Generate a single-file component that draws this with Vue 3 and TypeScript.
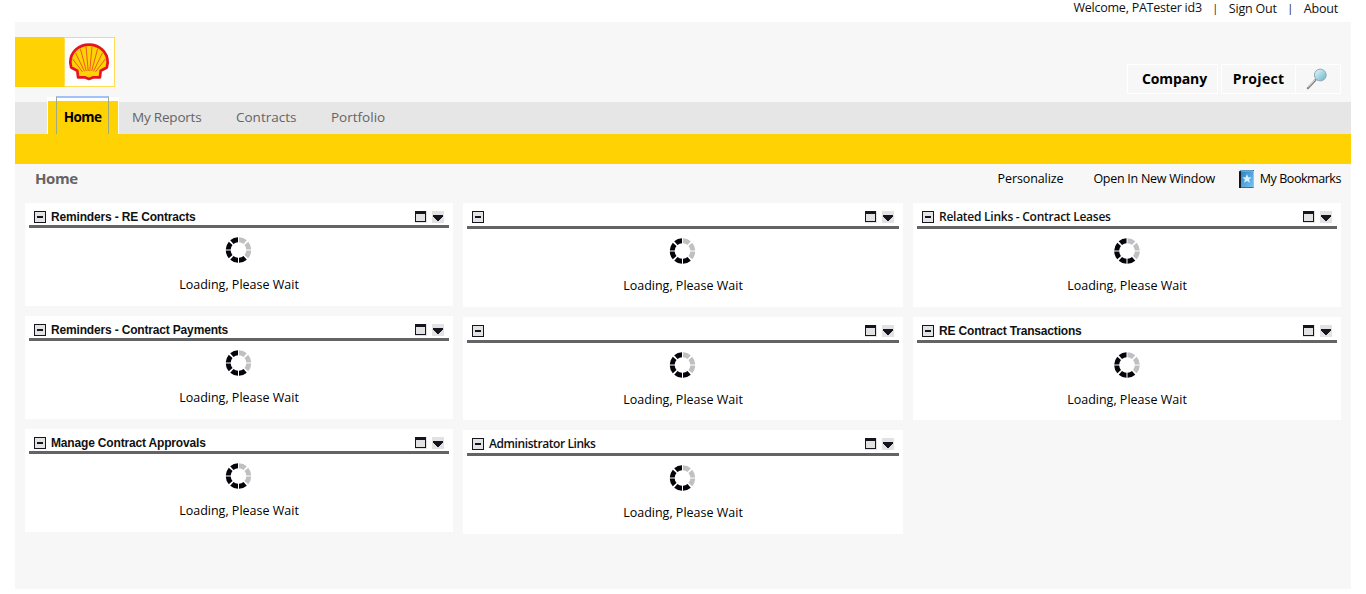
<script setup lang="ts">
interface Portlet {
  title: string
  face: 'arial' | 'humanist' | 'humanist-tight'
}

const columns: { name: string; portlets: Portlet[] }[] = [
  {
    name: 'left',
    portlets: [
      { title: 'Reminders - RE Contracts', face: 'arial' },
      { title: 'Reminders - Contract Payments', face: 'arial' },
      { title: 'Manage Contract Approvals', face: 'arial' },
    ],
  },
  {
    name: 'middle',
    portlets: [
      { title: '', face: 'arial' },
      { title: '', face: 'arial' },
      { title: 'Administrator Links', face: 'humanist-tight' },
    ],
  },
  {
    name: 'right',
    portlets: [
      { title: 'Related Links - Contract Leases', face: 'humanist' },
      { title: 'RE Contract Transactions', face: 'arial' },
    ],
  },
]

const tabs = [
  { label: 'My Reports', cls: 'reports' },
  { label: 'Contracts', cls: 'contracts' },
  { label: 'Portfolio', cls: 'portfolio' },
]

/* Eight ring segments, clockwise from the top */
const segments = [0, 1, 2, 3, 4, 5, 6, 7].map((i) => ({
  angle: (i >> 1) * 90,
  flip: i % 2 === 1,
  color: i < 3 ? '#c0c0c2' : '#05050c',
}))
</script>

<template>
  <div class="screen">
    <div class="account">
      <span class="welcome">Welcome, PATester id3</span>
      <span class="bar">|</span>
      <a class="signout">Sign Out</a>
      <span class="bar">|</span>
      <a class="about">About</a>
    </div>

    <div class="page">
      <header class="masthead">
        <div class="brand">
          <div class="brand-block"></div>
          <div class="brand-mark">
            <svg width="42" height="40" viewBox="0 0 42 40">
              <path
                d="M21 2.600C31 2.600 39.700 10 39.700 20.500L38.800 25.500L32.700 28.700L31.900 35.400L24.800 35.400L21 36.900L17.200 35.400L10.100 35.400L9.300 28.700L3.200 25.500L2.300 20.500C2.300 10 11 2.600 21 2.600Z"
                fill="#ffd203"
                stroke="#e61420"
                stroke-width="2.700"
                stroke-linejoin="round"
              />
              <path
                d="M20.200 29L18 4.500M18.300 29L12.300 6.500M16.500 29.300L7.600 11M14.500 29.800L4.200 16.500M21.800 29L24 4.500M23.700 29L29.700 6.500M25.500 29.300L34.400 11M27.500 29.800L37.800 16.500"
                stroke="#ec5a28"
                stroke-width="1"
                fill="none"
              />
            </svg>
          </div>
        </div>
        <div class="tools">
          <a class="tool company"><span>Company</span></a>
          <a class="tool project"><span>Project</span></a>
          <a class="tool search">
            <svg width="22" height="22" viewBox="0 0 22 22">
              <defs>
                <linearGradient id="lens" x1="0" y1="0" x2="1" y2="1">
                  <stop offset="0" stop-color="#eefafc" />
                  <stop offset="1" stop-color="#5fb4c8" />
                </linearGradient>
              </defs>
              <path d="M1.800 20.200L9.500 12" stroke="#858585" stroke-width="2.200" stroke-linecap="round" />
              <path d="M2 19.300L9 11.800" stroke="#d6d6d6" stroke-width="1" />
              <circle cx="14.300" cy="7" r="5.900" fill="url(#lens)" stroke="#92aab2" stroke-width="1" />
            </svg>
          </a>
        </div>
      </header>

      <nav class="tabs">
        <a class="tab-home"><span class="focus">Home</span></a>
        <a v-for="t in tabs" :key="t.label" class="tab" :class="t.cls">{{ t.label }}</a>
      </nav>
      <div class="band"></div>

      <div class="titlebar">
        <h1>Home</h1>
        <div class="actions">
          <a class="personalize">Personalize</a>
          <a class="newwin">Open In New Window</a>
          <svg class="book" width="16" height="18" viewBox="0 0 16 18">
            <defs>
              <linearGradient id="cover" x1="0" y1="0" x2="1" y2="1">
                <stop offset="0" stop-color="#2b83c4" />
                <stop offset="1" stop-color="#76c3f3" />
              </linearGradient>
            </defs>
            <path d="M0 1.500L2 0H15V18H0Z" fill="#2474ac" />
            <path d="M0 1.500L2 1V18H0Z" fill="#10171f" />
            <rect x="2" y="1.500" width="12" height="15.500" fill="url(#cover)" />
            <path d="M2 1H14M14.500 1V17.500" stroke="#b5daf0" stroke-width="0.800" />
            <path
              d="M8 4L9.300 7.200L12.700 7.400L10.100 9.500L11 12.800L8 11L5 12.800L5.900 9.500L3.300 7.400L6.700 7.200Z"
              fill="#d8effc"
            />
          </svg>
          <a class="bookmarks">My Bookmarks</a>
        </div>
      </div>

      <main class="board">
        <div v-for="col in columns" :key="col.name" class="column" :class="col.name">
          <section v-for="(p, i) in col.portlets" :key="i" class="portlet">
            <div class="head">
              <svg width="12" height="12" shape-rendering="crispEdges">
                <rect x="0.500" y="0.500" width="11" height="11" fill="#e3e3e3" stroke="#15151f" />
                <rect x="3" y="5" width="6" height="2" fill="#15151f" />
              </svg>
              <h2 :class="p.face">{{ p.title }}</h2>
              <svg width="12" height="12" shape-rendering="crispEdges">
                <rect width="12" height="12" fill="#e2e2e2" />
                <rect x="0.500" y="0.500" width="10" height="10" fill="none" stroke="#15151f" />
                <rect width="11" height="3" fill="#15151f" />
              </svg>
              <svg class="menu" width="12" height="12" shape-rendering="crispEdges">
                <rect width="12" height="12" fill="#e2e2e2" />
                <path d="M1 4H11V6H10V7H9V8H8V9H7V10H5V9H4V8H3V7H2V6H1Z" fill="#15151f" />
              </svg>
            </div>
            <div class="body">
              <svg width="26" height="26" viewBox="-13 -13 26 26">
                <path
                  v-for="(s, n) in segments"
                  :key="n"
                  d="M0.500 -12.800A12.800 12.800 0 0 1 8.300 -9.700L5 -6A7.800 7.800 0 0 0 0.500 -7.800Z"
                  :fill="s.color"
                  :transform="`rotate(${s.angle})${s.flip ? ' matrix(0 -1 -1 0 0 0)' : ''}`"
                />
              </svg>
              <p>Loading, Please Wait</p>
            </div>
          </section>
        </div>
      </main>
    </div>
  </div>
</template>

<style>
body {
  margin: 0;
  background: #fff;
  overflow: hidden;
}
</style>

<style scoped>
.screen {
  height: 594px;
  padding: 0 15px;
  box-sizing: border-box;
  font-family: 'Trebuchet MS', 'Open Sans', sans-serif;
  font-size: 12.5px;
  line-height: 16px;
  color: #111;
  white-space: nowrap;
}
.account {
  height: 22px;
  display: flex;
  justify-content: flex-end;
  padding-right: 13px;
}
.welcome {
  letter-spacing: -0.24px;
}
.signout,
.about {
  letter-spacing: -0.2px;
  line-height: 18px;
}
.bar {
  width: 27px;
  text-align: center;
  font-size: 11px;
}
.page {
  height: 567px;
  background: #f7f7f7;
}
.masthead {
  height: 80px;
  display: flex;
  justify-content: space-between;
  box-sizing: border-box;
  padding-top: 15px;
}
.brand {
  display: flex;
  width: 100px;
  height: 50px;
}
.brand-block {
  width: 49px;
  background: #ffd203;
}
.brand-mark {
  width: 51px;
  height: 50px;
  box-sizing: border-box;
  border: 1px solid #ffdf50;
  background: #fff;
  padding: 4px 0 0 3px;
}
.tools {
  display: flex;
  padding: 27px 10px 0 0;
}
.tool {
  box-sizing: border-box;
  height: 30px;
  border: 1px solid #fff;
  font-size: 14px;
  font-weight: 700;
  color: #000;
  line-height: 28px;
  display: flex;
  justify-content: center;
}
.company {
  width: 91px;
  margin-right: 3px;
  padding-left: 4px;
  letter-spacing: -0.1px;
}
.project {
  width: 74px;
  border-right: 0;
  letter-spacing: 0.3px;
}
.search {
  width: 46px;
  padding: 3px 2px 0 0;
}
.tabs {
  height: 32px;
  background: #e6e6e6;
  display: flex;
  align-items: flex-end;
  color: #646464;
  font-size: 13.5px;
}
.tab-home {
  box-sizing: border-box;
  width: 72px;
  height: 37px;
  margin-left: 32px;
  border: solid #fff;
  border-width: 4px 1px 0;
  background: #ffd203;
  color: #000;
  font-weight: 700;
  font-size: 13.5px;
  letter-spacing: -0.6px;
}
.focus {
  display: block;
  box-sizing: border-box;
  width: 53px;
  height: 38px;
  margin: -5px 0 0 8px;
  border: solid #a3aa80;
  border-width: 2px 1px 0;
  border-top-color: #a0c3f8;
  line-height: 38px;
  text-align: center;
}
.tab {
  line-height: 30px;
  height: 32px;
}
.reports {
  margin-left: 13px;
  width: 104px;
  letter-spacing: -0.2px;
}
.contracts {
  width: 95px;
}
.band {
  height: 30px;
  background: #ffd203;
}
.titlebar {
  height: 39px;
  display: flex;
  justify-content: space-between;
  padding: 0 10px 0 20px;
  line-height: 30px;
}
h1 {
  margin: 0;
  font-size: 15px;
  font-weight: 700;
  line-height: 28px;
  letter-spacing: -0.4px;
  color: #646464;
}
.actions {
  display: flex;
  color: #000;
}
.personalize {
  letter-spacing: -0.1px;
}
.newwin {
  margin: 0 24px 0 30px;
  letter-spacing: -0.27px;
}
.book {
  margin: 6px 5px 0 0;
}
.bookmarks {
  letter-spacing: -0.45px;
}
.board {
  display: flex;
  gap: 10px;
  padding: 0 10px;
}
.column {
  display: flex;
  flex-direction: column;
  gap: 10px;
  width: 428px;
}
.middle {
  width: 440px;
}
.portlet {
  height: 103px;
  box-sizing: border-box;
  padding: 0 4px;
  background: #fff;
}
.middle .portlet,
.right .portlet {
  height: 103.5px;
}
.head {
  box-sizing: border-box;
  height: 25px;
  border-bottom: 3px solid #646464;
  display: flex;
  padding: 8px 5px 0;
}
.middle .head,
.right .head {
  height: 26px;
}
.head svg {
  flex: none;
}
.head .menu {
  margin-left: 5px;
}
h2 {
  margin: 0 0 0 5px;
  flex: 1;
  font-size: 12px;
  font-weight: 600;
  line-height: 12px;
}
.arial {
  font-family: 'Liberation Sans', Arial, sans-serif;
  letter-spacing: -0.17px;
}
.humanist {
  letter-spacing: -0.26px;
}
.humanist-tight {
  letter-spacing: -0.42px;
}
.body {
  text-align: center;
}
.body svg {
  display: block;
  margin: 9px auto 0;
}
.left .body svg,
.middle .body svg {
  transform: translateX(-0.5px);
}
p {
  margin: 14px 0 0;
  color: #000;
}
</style>
